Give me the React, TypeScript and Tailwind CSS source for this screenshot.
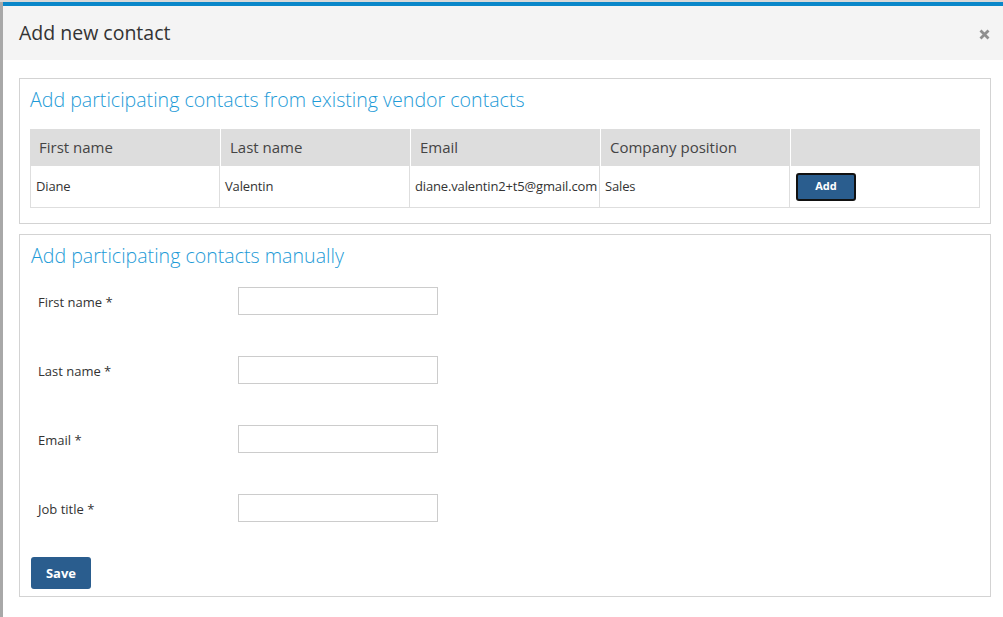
import React from "react";

const font = { fontFamily: '"Open Sans", "Noto Sans", sans-serif' };

export default function App() {
  const cols = ["First name", "Last name", "Email", "Company position", ""];
  const row = ["Diane", "Valentin", "diane.valentin2+t5@gmail.com", "Sales"];
  const fields = ["First name *", "Last name *", "Email *", "Job title *"];
  return (
    <div className="w-[1003px] h-[617px] overflow-hidden bg-[#aaaaaa] flex flex-col" style={font}>
      <div className="h-[2px] bg-[#d8d8d8] shrink-0" />
      <div className="flex flex-1 min-h-0">
        <div className="w-[3px] bg-[#a8a8a8] shrink-0" />
        <div className="flex-1 flex flex-col bg-white">
          <div className="h-[4px] bg-[#0a87c9] shrink-0" />
          <div className="h-[54px] bg-[#f4f4f4] flex items-center justify-between pl-[16px] pr-[14px] shrink-0">
            <span className="text-[19.5px] text-[#333333] leading-none">Add new contact</span>
            <svg width="11" height="11" viewBox="0 0 11 11" className="mt-[2px]">
              <path d="M1.5 1.5 L9.5 9.5 M9.5 1.5 L1.5 9.5" stroke="#8f8f8f" strokeWidth="2.8" strokeLinecap="butt" />
            </svg>
          </div>
          <div className="flex-1 pt-[18px] pl-[16px] pr-[13px] flex flex-col gap-[10px]">
            <div className="border border-[#d3d3d3] pt-[8px] px-[10px] pb-[15px]">
              <h2 className="text-[19.6px] text-[#1e9bd7] leading-[26px] font-light mb-[16px]">
                Add participating contacts from existing vendor contacts
              </h2>
              <div className="border-b border-[#dedede]">
                <div className="grid grid-cols-[190px_190px_190px_190px_190px] bg-[#dddddd] h-[37px]">
                  {cols.map((c, i) => (
                    <div key={i} className={`flex items-center pl-[9px] text-[15px] text-[#444444] ${i > 0 ? "border-l border-white" : ""}`}>
                      {c}
                    </div>
                  ))}
                </div>
                <div className="grid grid-cols-[190px_190px_190px_190px_190px] h-[41px]">
                  {row.map((c, i) => (
                    <div key={i} className={`flex items-center pl-[5px] text-[13px] tracking-[-0.15px] text-[#333333] ${i === 0 ? "border-l" : ""} border-r border-[#dedede]`}>
                      {c}
                    </div>
                  ))}
                  <div className="flex items-center pl-[6px] border-r border-[#dedede]">
                    <button className="w-[60px] h-[28px] bg-[#2a5d8e] border-2 border-[#111111] rounded-[3px] text-white text-[11px] font-bold">
                      Add
                    </button>
                  </div>
                </div>
              </div>
            </div>
            <div className="border border-[#d3d3d3] pt-[8px] px-[11px] pb-[7px]">
              <h2 className="text-[19.6px] text-[#1e9bd7] leading-[26px] font-light mb-[18px]">
                Add participating contacts manually
              </h2>
              <div className="flex flex-col gap-[41px] pl-[7px]">
                {fields.map((f) => (
                  <div key={f} className="flex items-center h-[28px]">
                    <label className="w-[200px] pt-[3px] text-[13px] text-[#333333]">{f}</label>
                    <input className="w-[200px] h-[28px] border border-[#cccccc] bg-white outline-none" />
                  </div>
                ))}
              </div>
              <button className="mt-[35px] w-[60px] h-[32px] pt-[1px] bg-[#2a5d8e] rounded-[3px] text-white text-[13px] font-bold">
                Save
              </button>
            </div>
          </div>
        </div>
      </div>
    </div>
  );
}
